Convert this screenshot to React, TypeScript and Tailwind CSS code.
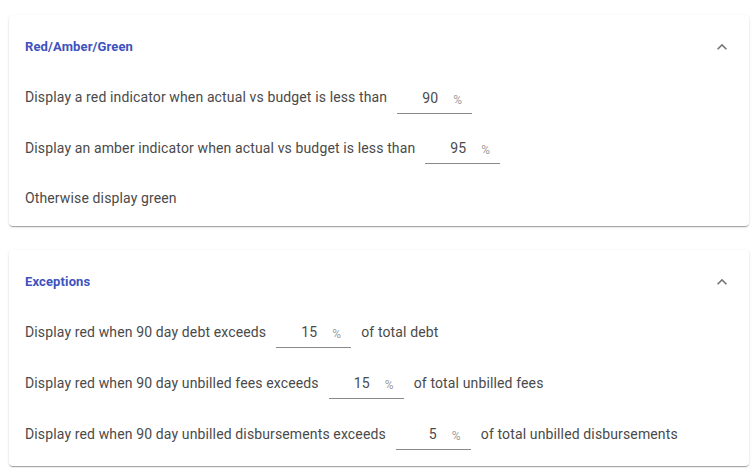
import React from "react";

const font = { fontFamily: "Roboto, 'Liberation Sans', sans-serif" };

function Chevron() {
  return (
    <svg width="20" height="20" viewBox="0 0 24 24" className="text-[#757575]">
      <path fill="currentColor" d="M12 8l-6 6 1.41 1.41L12 10.83l4.59 4.58L18 14z" />
    </svg>
  );
}

function PctInput({ value }: { value: string }) {
  return (
    <div className="flex items-center h-[32px] w-[75px] border-b border-[#8a8a8a] ml-[10px] mr-[10px] shrink-0">
      <span className="w-[41px] text-right text-[14px] text-[#4a4a4a] pt-[2px]">{value}</span>
      <span className="ml-[15px] text-[12px] text-[#a0a0a0] pt-[5px]">%</span>
    </div>
  );
}

function Row({ h, children }: { h: string; children: React.ReactNode }) {
  return (
    <div className={`flex items-center text-[14px] tracking-[0.00938em] text-[#4a4a4a] ${h}`}>{children}</div>
  );
}

function Card({ title, children, pb }: { title: string; children: React.ReactNode; pb: string }) {
  return (
    <div
      className={`bg-white rounded-[4px] shadow-[0px_2px_1px_-1px_rgba(0,0,0,0.2),0px_1px_1px_0px_rgba(0,0,0,0.14),0px_1px_3px_0px_rgba(0,0,0,0.12)] ${pb}`}
    >
      <div className="flex items-center justify-between h-[57px] pl-[16px] pr-[17px] pt-[6px]">
        <span className="text-[13px] font-bold tracking-[0.01em] text-[#4052bd]">{title}</span>
        <Chevron />
      </div>
      <div className="pl-[16px]">{children}</div>
    </div>
  );
}

export default function App() {
  return (
    <div className="min-h-[468px] bg-white pt-[15px]" style={font}>
      <div className="ml-[9px] w-[740px] flex flex-col gap-[24px]">
        <Card title="Red/Amber/Green" pb="pb-[3px]">
          <Row h="h-[51px]">
            <span>Display a red indicator when actual vs budget is less than</span>
            <PctInput value="90" />
          </Row>
          <Row h="h-[50px]">
            <span>Display an amber indicator when actual vs budget is less than</span>
            <PctInput value="95" />
          </Row>
          <Row h="h-[50px]">
            <span>Otherwise display green</span>
          </Row>
        </Card>
        <Card title="Exceptions" pb="pb-[7px]">
          <Row h="h-[50px]">
            <span>Display red when 90 day debt exceeds</span>
            <PctInput value="15" />
            <span>of total debt</span>
          </Row>
          <Row h="h-[52px]">
            <span>Display red when 90 day unbilled fees exceeds</span>
            <PctInput value="15" />
            <span>of total unbilled fees</span>
          </Row>
          <Row h="h-[50px]">
            <span>Display red when 90 day unbilled disbursements exceeds</span>
            <PctInput value="5" />
            <span>of total unbilled disbursements</span>
          </Row>
        </Card>
      </div>
    </div>
  );
}
